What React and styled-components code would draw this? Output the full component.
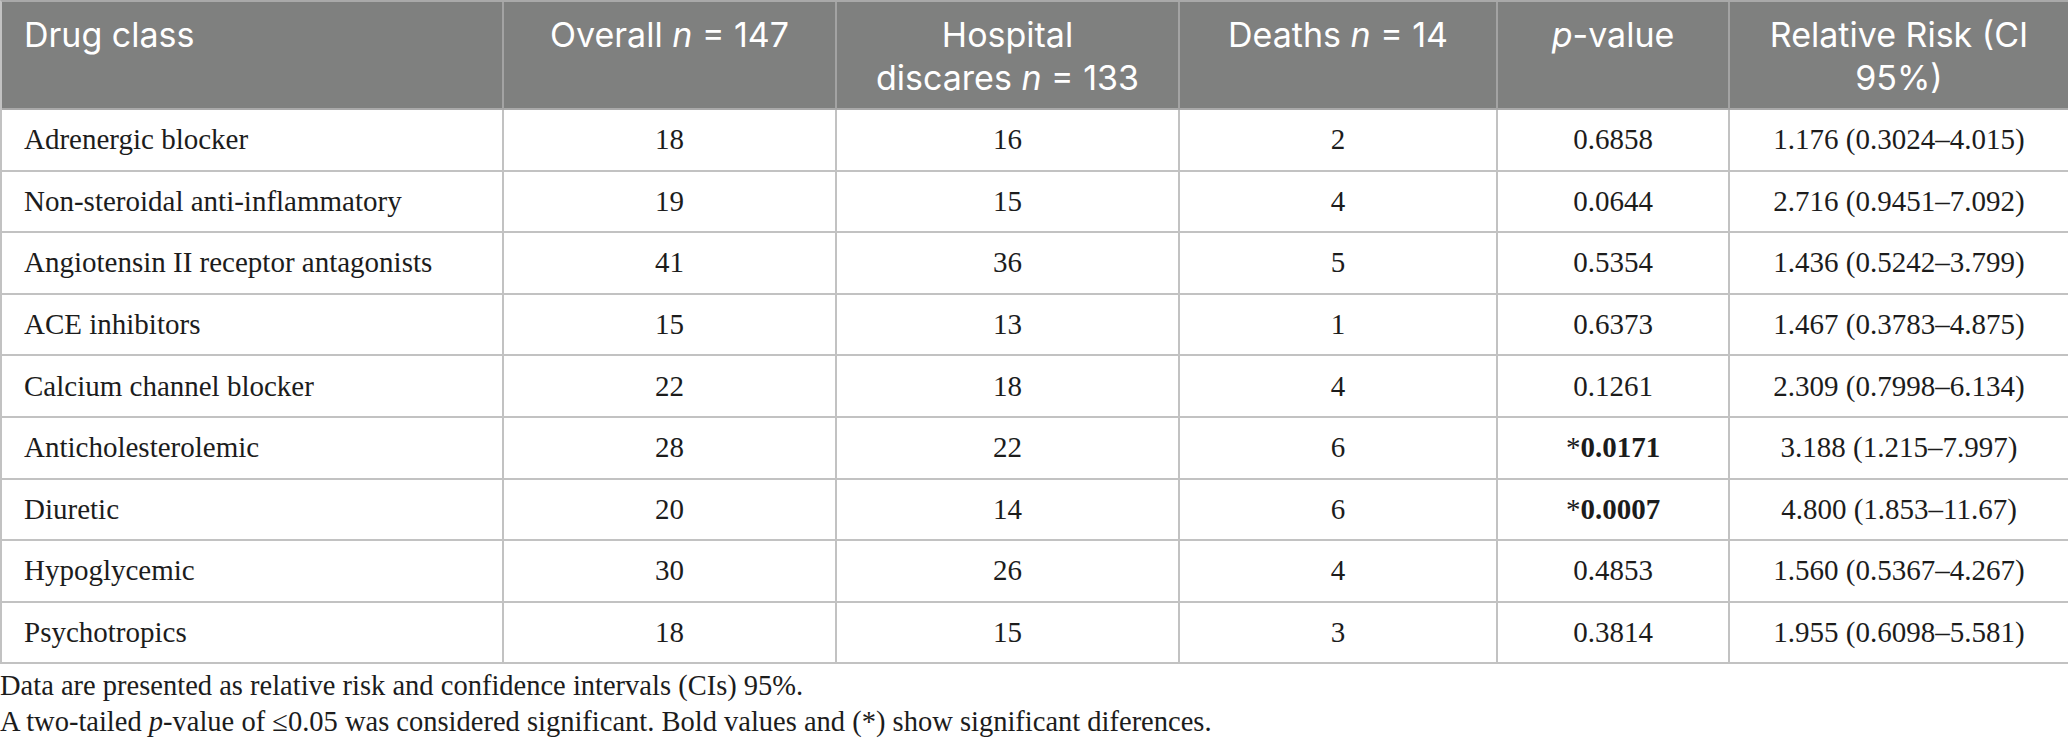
import React from 'react';
import styled, { createGlobalStyle } from 'styled-components';

const rows = [
  { drug: 'Adrenergic blocker', overall: 18, discharges: 16, deaths: 2, p: '0.6858', rr: '1.176 (0.3024–4.015)' },
  { drug: 'Non-steroidal anti-inflammatory', overall: 19, discharges: 15, deaths: 4, p: '0.0644', rr: '2.716 (0.9451–7.092)' },
  { drug: 'Angiotensin II receptor antagonists', overall: 41, discharges: 36, deaths: 5, p: '0.5354', rr: '1.436 (0.5242–3.799)' },
  { drug: 'ACE inhibitors', overall: 15, discharges: 13, deaths: 1, p: '0.6373', rr: '1.467 (0.3783–4.875)' },
  { drug: 'Calcium channel blocker', overall: 22, discharges: 18, deaths: 4, p: '0.1261', rr: '2.309 (0.7998–6.134)' },
  { drug: 'Anticholesterolemic', overall: 28, discharges: 22, deaths: 6, p: '0.0171', rr: '3.188 (1.215–7.997)', significant: true },
  { drug: 'Diuretic', overall: 20, discharges: 14, deaths: 6, p: '0.0007', rr: '4.800 (1.853–11.67)', significant: true },
  { drug: 'Hypoglycemic', overall: 30, discharges: 26, deaths: 4, p: '0.4853', rr: '1.560 (0.5367–4.267)' },
  { drug: 'Psychotropics', overall: 18, discharges: 15, deaths: 3, p: '0.3814', rr: '1.955 (0.6098–5.581)' },
];

const colWidths = [502, 333, 343, 318, 232, 340];

export default function App() {
  return (
    <>
      <GlobalStyle />
      <Wrapper>
        <Table>
          <colgroup>
            {colWidths.map((w, i) => (
              <col key={i} style={{ width: w }} />
            ))}
          </colgroup>
          <thead>
            <tr>
              <HeadCell $align="left">Drug class</HeadCell>
              <HeadCell>
                Overall <i>n</i> = 147
              </HeadCell>
              <HeadCell>
                Hospital
                <br />
                discares <i>n</i> = 133
              </HeadCell>
              <HeadCell>
                Deaths <i>n</i> = 14
              </HeadCell>
              <HeadCell>
                <i>p</i>-value
              </HeadCell>
              <HeadCell>
                Relative Risk (CI
                <br />
                95%)
              </HeadCell>
            </tr>
          </thead>
          <tbody>
            {rows.map((row) => (
              <tr key={row.drug}>
                <Cell $align="left">{row.drug}</Cell>
                <Cell>{row.overall}</Cell>
                <Cell>{row.discharges}</Cell>
                <Cell>{row.deaths}</Cell>
                <Cell>
                  {row.significant ? (
                    <>
                      <Star>*</Star>
                      <strong>{row.p}</strong>
                    </>
                  ) : (
                    row.p
                  )}
                </Cell>
                <Cell>{row.rr}</Cell>
              </tr>
            ))}
          </tbody>
        </Table>
        <Notes>
          <p>Data are presented as relative risk and confidence intervals (CIs) 95%.</p>
          <p>
            A two-tailed <i>p</i>-value of ≤0.05 was considered significant. Bold values and (*) show significant
            diferences.
          </p>
        </Notes>
      </Wrapper>
    </>
  );
}

const GlobalStyle = createGlobalStyle`
  body {
    margin: 0;
    background: #ffffff;
  }
`;

const Wrapper = styled.div`
  width: 2068px;
  display: flex;
  flex-direction: column;
`;

const Table = styled.table`
  width: 2068px;
  table-layout: fixed;
  border-collapse: separate;
  border-spacing: 0;
  border-top: 2px solid #a9a9a9;
  border-left: 2px solid #c2c2c2;
`;

const HeadCell = styled.th`
  height: 108px;
  box-sizing: border-box;
  padding: 11px 22px 0;
  vertical-align: top;
  text-align: ${(props) => props.$align || 'center'};
  background: #7f807f;
  color: #ffffff;
  font-family: Inter, 'Open Sans', sans-serif;
  font-weight: 400;
  font-size: 34px;
  line-height: 43px;
  border-right: 2px solid #a3a3a3;
  border-bottom: 2px solid #a9a9a9;

  i {
    font-style: italic;
  }
`;

const Cell = styled.td`
  height: 61.6px;
  box-sizing: border-box;
  padding: 0 22px;
  vertical-align: middle;
  text-align: ${(props) => props.$align || 'center'};
  font-family: 'Liberation Serif', 'Times New Roman', serif;
  font-size: 29px;
  color: #1c1c1c;
  border-right: 2px solid #c2c2c2;
  border-bottom: 2px solid #c2c2c2;
  white-space: nowrap;

  strong {
    font-weight: 700;
  }
`;

const Star = styled.span`
  font-weight: 400;
`;

const Notes = styled.div`
  padding-top: 4px;
  font-family: 'Liberation Serif', 'Times New Roman', serif;
  font-size: 28.5px;
  line-height: 36px;
  color: #1c1c1c;

  p {
    margin: 0;
  }
`;
